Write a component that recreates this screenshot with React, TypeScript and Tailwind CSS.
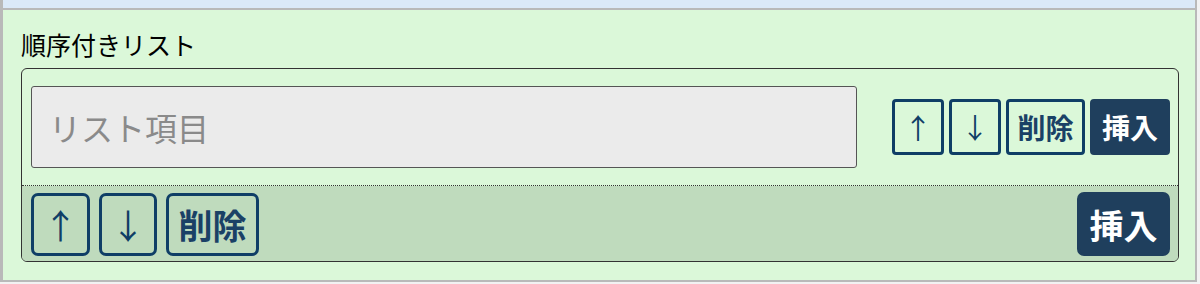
const font = { fontFamily: '"Noto Sans CJK JP", "Noto Sans", sans-serif' };

const App = () => {
  return (
    <div className="w-[1200px] h-[284px] bg-[#f2f2f2] overflow-hidden" style={font}>
      <div className="w-[1197px] border-l-[3px] border-r-2 border-[#b9b9b9]">
        <div className="h-[10px] bg-[#dbe9f8] border-b-2 border-[#b9b9b9] box-border"></div>
        <div className="bg-[#dbf8d9] border-b-2 border-[#b9b9b9] pl-[18px] pr-[16px] pt-[17px] pb-[18px]">
          <div className="text-[25px] leading-[34px] h-[34px] text-black">順序付きリスト</div>
          <div className="mt-[7px] border border-[#333] rounded-[6px] overflow-hidden">
            <div className="flex items-center justify-between pl-[9px] pr-[8px] py-[17px] border-b border-dotted border-[#333]">
              <input
                className="w-[826px] h-[82px] bg-[#ebebeb] border border-[#555] rounded-[3px] pl-[17px] text-[32px] placeholder:text-[#8a8a8a] outline-none"
                placeholder="リスト項目"
              />
              <div className="flex gap-[5px]">
                <button className="w-[52px] h-[56px] border-[3px] border-[#0f3e66] rounded-[4px] text-[28px] text-[#0f3e66] flex items-center justify-center">↑</button>
                <button className="w-[52px] h-[56px] border-[3px] border-[#0f3e66] rounded-[4px] text-[28px] text-[#0f3e66] flex items-center justify-center">↓</button>
                <button className="w-[79px] h-[56px] border-[3px] border-[#0f3e66] rounded-[4px] text-[28px] font-bold text-[#1a4166] flex items-center justify-center">削除</button>
                <button className="w-[80px] h-[56px] border-[3px] border-[#1f3f5d] bg-[#1f3f5d] rounded-[4px] text-[28px] font-bold text-white flex items-center justify-center">挿入</button>
              </div>
            </div>
            <div className="flex items-center justify-between bg-[#bfdbbd] pl-[9px] pr-[8px] pt-[6px] pb-[5px]">
              <div className="flex gap-[9px]">
                <button className="w-[59px] h-[63px] border-[3px] border-[#0f3e66] rounded-[7px] text-[34px] text-[#0f3e66] flex items-center justify-center">↑</button>
                <button className="w-[58px] h-[63px] border-[3px] border-[#0f3e66] rounded-[7px] text-[34px] text-[#0f3e66] flex items-center justify-center">↓</button>
                <button className="w-[93px] h-[63px] border-[3px] border-[#0f3e66] rounded-[7px] text-[34px] font-bold text-[#1a4166] flex items-center justify-center">削除</button>
              </div>
              <button className="w-[93px] h-[64px] border-[3px] border-[#1f3f5d] bg-[#1f3f5d] rounded-[7px] text-[34px] font-bold text-white flex items-center justify-center">挿入</button>
            </div>
          </div>
        </div>
      </div>
    </div>
  );
};

export default App;
